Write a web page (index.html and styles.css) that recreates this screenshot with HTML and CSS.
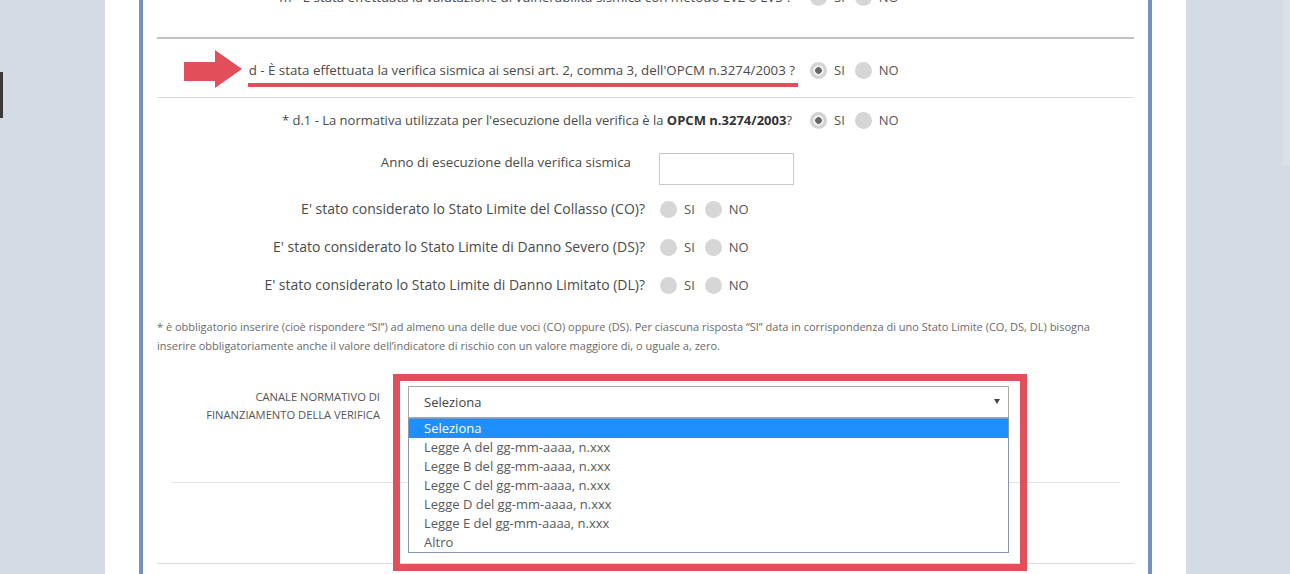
FILE: index.html
```html
<!DOCTYPE html>
<html lang="it">
<head>
    <meta charset="UTF-8">
    <meta name="viewport" content="width=device-width, initial-scale=1.0">
    <title>Verifica sismica</title>
    <link rel="stylesheet" href="styles.css">
</head>
<body>

<div class="screen">
    <aside class="gutter-left"><span class="side-tab"></span></aside>

    <main class="sheet">
        <div class="panel">

            <div class="q-row q-row-cut">
                <div class="q-label">m - È stata effettuata la valutazione di vulnerabilità sismica con metodo LV2 o LV3 ?</div>
                <div class="choice">
                    <span class="radio"></span><span class="opt">SI</span>
                    <span class="radio"></span><span class="opt">NO</span>
                </div>
            </div>

            <div class="rule-strong"></div>

            <div class="q-row q-row-main">
                <div class="q-label">
                    <span class="marked">
                        <svg class="pointer" width="58" height="38" viewBox="0 0 58 38">
                            <rect x="0" y="12" width="33" height="19" fill="#e04f5a"/>
                            <polygon points="31,0 58,19 31,38" fill="#e04f5a"/>
                        </svg>
                        d - È stata effettuata la verifica sismica ai sensi art. 2, comma 3, dell'OPCM n.3274/2003 ?
                    </span>
                </div>
                <div class="choice">
                    <span class="radio on"></span><span class="opt">SI</span>
                    <span class="radio"></span><span class="opt">NO</span>
                </div>
            </div>

            <div class="q-row q-row-sub">
                <div class="q-label">* d.1 - La normativa utilizzata per l'esecuzione della verifica è la <b>OPCM n.3274/2003</b>?</div>
                <div class="choice">
                    <span class="radio on"></span><span class="opt">SI</span>
                    <span class="radio"></span><span class="opt">NO</span>
                </div>
            </div>

            <div class="f-row f-row-input">
                <div class="f-label">Anno di esecuzione della verifica sismica</div>
                <input type="text" class="year-input">
            </div>

            <div class="f-row">
                <div class="f-label">E' stato considerato lo Stato Limite del Collasso (CO)?</div>
                <div class="choice">
                    <span class="radio"></span><span class="opt">SI</span>
                    <span class="radio"></span><span class="opt">NO</span>
                </div>
            </div>
            <div class="f-row">
                <div class="f-label">E' stato considerato lo Stato Limite di Danno Severo (DS)?</div>
                <div class="choice">
                    <span class="radio"></span><span class="opt">SI</span>
                    <span class="radio"></span><span class="opt">NO</span>
                </div>
            </div>
            <div class="f-row">
                <div class="f-label">E' stato considerato lo Stato Limite di Danno Limitato (DL)?</div>
                <div class="choice">
                    <span class="radio"></span><span class="opt">SI</span>
                    <span class="radio"></span><span class="opt">NO</span>
                </div>
            </div>

            <p class="note">* è obbligatorio inserire (cioè rispondere “SI”) ad almeno una delle due voci (CO) oppure (DS). Per ciascuna risposta “SI” data in corrispondenza di uno Stato Limite (CO, DS, DL) bisogna<br>inserire obbligatoriamente anche il valore dell’indicatore di rischio con un valore maggiore di, o uguale a, zero.</p>

            <div class="canale-row">
                <div class="canale-label">Canale normativo di<br>finanziamento della verifica</div>
                <div class="select-box">
                    <span class="select-value">Seleziona</span>
                    <span class="select-caret"></span>

                    <ul class="select-list">
                        <li class="active">Seleziona</li>
                        <li>Legge A del gg-mm-aaaa, n.xxx</li>
                        <li>Legge B del gg-mm-aaaa, n.xxx</li>
                        <li>Legge C del gg-mm-aaaa, n.xxx</li>
                        <li>Legge D del gg-mm-aaaa, n.xxx</li>
                        <li>Legge E del gg-mm-aaaa, n.xxx</li>
                        <li>Altro</li>
                    </ul>

                    <div class="frame"></div>
                </div>
            </div>

            <div class="rule-inset"></div>
            <div class="tail"></div>

        </div>
    </main>

    <aside class="gutter-right"><span class="edge-strip"></span></aside>
</div>

</body>
</html>
```

FILE: styles.css
```css
body {
    margin: 0;
    font-family: "Open Sans", "Noto Sans", sans-serif;
    background: #d4dbe4;
    color: #4a4a4a;
}

.screen {
    display: flex;
    height: 574px;
    overflow: hidden;
}

.gutter-left {
    width: 105px;
    flex: none;
}
.side-tab {
    display: block;
    width: 3px;
    height: 46px;
    margin-top: 72px;
    background: #3b3b3b;
}

.gutter-right {
    flex: 1;
    display: flex;
    justify-content: flex-end;
}
.edge-strip {
    width: 7px;
    height: 165px;
    background: #dbe1e8;
}

.sheet {
    width: 1081px;
    flex: none;
    background: #ffffff;
    padding: 0 34px;
    box-sizing: border-box;
}

.panel {
    display: flow-root;
    height: 100%;
    border-left: 4px solid #7193c6;
    border-right: 4px solid #7193c6;
    padding: 0 14px;
}

/* question rows: label on the left, SI / NO on the right */
.q-row {
    display: grid;
    grid-template-columns: 641px 1fr;
    column-gap: 12px;
    align-items: start;
    font-size: 13.3px;
    line-height: 20px;
}
.q-label {
    text-align: right;
    padding-right: 6px;
}
.q-row-cut {
    margin-top: -20px;
    height: 34px;
    margin-bottom: 23px;
    align-items: center;
}
.q-row-main {
    padding: 21px 0 10px;
    border-bottom: 1px solid #dcdcdc;
}
.q-row-main .q-label {
    padding-right: 0;
}
.q-row-sub {
    padding: 12px 0 10px;
    font-size: 13px;
}
.q-row-sub b {
    color: #333;
}

.rule-strong {
    border-top: 2px solid #c2c2c2;
}

.marked {
    position: relative;
    display: inline-block;
    padding: 0 3px 3px 1px;
    border-bottom: 4px solid #e04f5a;
}
.pointer {
    position: absolute;
    right: calc(100% + 6px);
    top: -10px;
}

.choice {
    display: flex;
    align-items: center;
    height: 20px;
    font-size: 13px;
    color: #555;
}
.radio {
    width: 17px;
    height: 17px;
    border-radius: 50%;
    background: #d6d6d6;
    margin-right: 7px;
}
.radio.on {
    background: radial-gradient(circle, #686868 0 3px, #ededed 3.6px 5px, #d3d3d3 5.6px);
}
.opt {
    margin-right: 10px;
}

/* form rows with a narrower label column */
.f-row {
    display: grid;
    grid-template-columns: 488px 1fr;
    column-gap: 15px;
    align-items: center;
    height: 38px;
    font-size: 14px;
    line-height: 20px;
}
.f-label {
    text-align: right;
}
.f-row-input {
    height: auto;
    align-items: start;
    padding: 12px 0 5px;
    font-size: 13.3px;
}
.f-row-input .f-label {
    padding-right: 14px;
}
.year-input {
    width: 135px;
    height: 32px;
    margin: 1px 0 0 -1px;
    box-sizing: border-box;
    border: 1px solid #c8c8c8;
    background: #fff;
}

.note {
    margin: 13px 0 0;
    font-size: 11px;
    line-height: 19px;
    color: #6a6a6a;
}

.canale-row {
    display: grid;
    grid-template-columns: 223px 601px;
    column-gap: 28px;
    align-items: start;
    margin-top: 19px;
    padding: 12px 0 0;
    height: 96px;
}
.canale-label {
    text-align: right;
    text-transform: uppercase;
    font-size: 11.2px;
    line-height: 18px;
    padding-top: 2px;
    color: #555;
}

.select-box {
    position: relative;
    height: 32px;
    border: 1px solid #a9a9a9;
    box-sizing: border-box;
    background: #fff;
    display: flex;
    align-items: center;
    padding: 0 8px 0 15px;
    font-size: 13px;
    color: #444;
}
.select-value {
    flex: 1;
}
.select-caret {
    width: 0;
    height: 0;
    border-left: 3px solid transparent;
    border-right: 3px solid transparent;
    border-top: 5px solid #444;
    margin-top: -2px;
}

.select-list {
    position: absolute;
    top: calc(100% + 1px);
    left: -1px;
    right: -1px;
    margin: 0;
    padding: 0;
    list-style: none;
    background: #fff;
    border: 1px solid #8797ad;
    border-top-color: #7d96b5;
}
.select-list li {
    height: 19px;
    line-height: 19px;
    padding-left: 15px;
    font-size: 13px;
    color: #5a5a5a;
}
.select-list li.active {
    background: #1e8fff;
    color: #fff;
}

/* red highlight frame round the open select */
.frame {
    position: absolute;
    top: -13px;
    left: -16px;
    width: 634px;
    height: 197px;
    box-sizing: border-box;
    border: 7px solid #e04f5a;
    pointer-events: none;
}

.rule-inset {
    margin: 0 14px 0 15px;
    border-top: 1px solid #e2e2e2;
}
.tail {
    height: 80px;
    border-bottom: 1px solid #dcdcdc;
}
```
